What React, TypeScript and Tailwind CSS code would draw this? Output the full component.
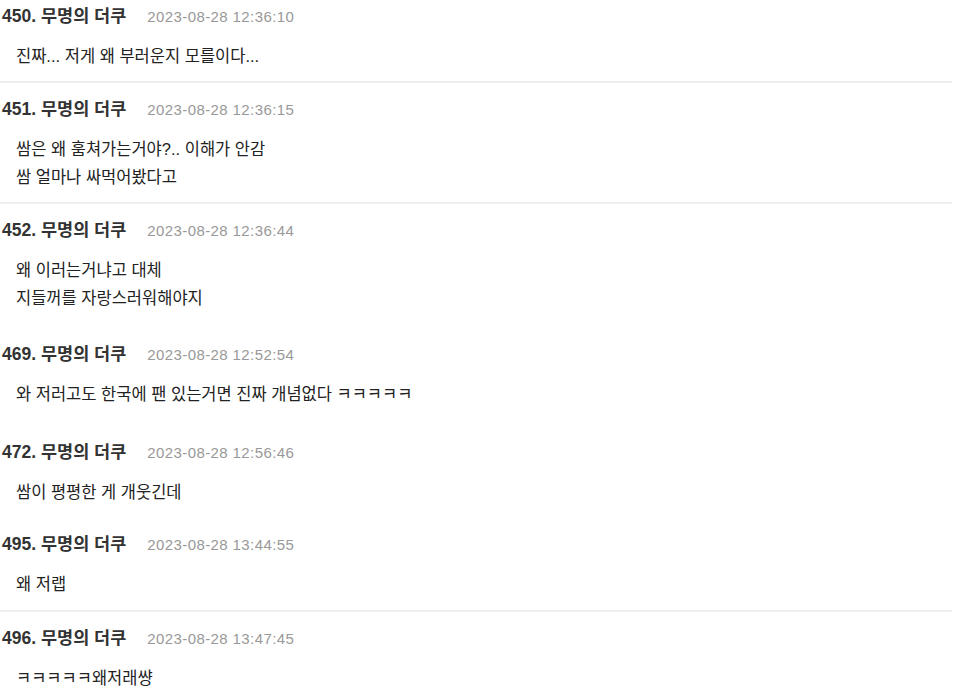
const comments = [
  { no: 450, time: "2023-08-28 12:36:10", lines: ["진짜... 저게 왜 부러운지 모를이다..."], pt: "pt-[4px]", pb: "pb-[11px]", sep: true },
  { no: 451, time: "2023-08-28 12:36:15", lines: ["쌈은 왜 훔쳐가는거야?.. 이해가 안감", "쌈 얼마나 싸먹어봤다고"], pt: "pt-[14px]", pb: "pb-[11px]", sep: true },
  { no: 452, time: "2023-08-28 12:36:44", lines: ["왜 이러는거냐고 대체", "지들꺼를 자랑스러워해야지"], pt: "pt-[14px]", pb: "pb-[15px]", sep: false },
  { no: 469, time: "2023-08-28 12:52:54", lines: ["와 저러고도 한국에 팬 있는거면 진짜 개념없다 ㅋㅋㅋㅋㅋ"], pt: "pt-[15px]", pb: "pb-[16px]", sep: false },
  { no: 472, time: "2023-08-28 12:56:46", lines: ["쌈이 평평한 게 개웃긴데"], pt: "pt-[16px]", pb: "pb-[13px]", sep: false },
  { no: 495, time: "2023-08-28 13:44:55", lines: ["왜 저랩"], pt: "pt-[13px]", pb: "pb-[12px]", sep: true },
  { no: 496, time: "2023-08-28 13:47:45", lines: ["ㅋㅋㅋㅋㅋ왜저래썅"], pt: "pt-[14px]", pb: "pb-[12px]", sep: false },
];

export default function App() {
  return (
    <main
      className="min-h-screen w-[960px] h-[690px] overflow-hidden bg-white"
      style={{ fontFamily: '"Liberation Sans", "Noto Sans CJK KR", sans-serif' }}
    >
      <div className="w-[952px]">
        {comments.map((c) => (
          <div
            key={c.no}
            className={`${c.pt} ${c.pb} ${c.sep ? "border-b-2 border-[#eeeeee]" : ""}`}
          >
            {/* header */}
            <div className="flex items-baseline h-6 leading-6 pl-[2px]">
              <span className="text-[17.5px] font-bold text-[#333333]">
                {c.no}. 무명의 더쿠
              </span>
              <span className="ml-[21px] text-[15px] text-[#999999] tracking-[0.4px]">
                {c.time}
              </span>
            </div>

            {/* body */}
            <div className="mt-[14px] pl-[16px] text-[16.5px] leading-[28px] text-[#222222]">
              {c.lines.map((l, i) => (
                <p key={i}>{l}</p>
              ))}
            </div>
          </div>
        ))}
      </div>
    </main>
  );
}
